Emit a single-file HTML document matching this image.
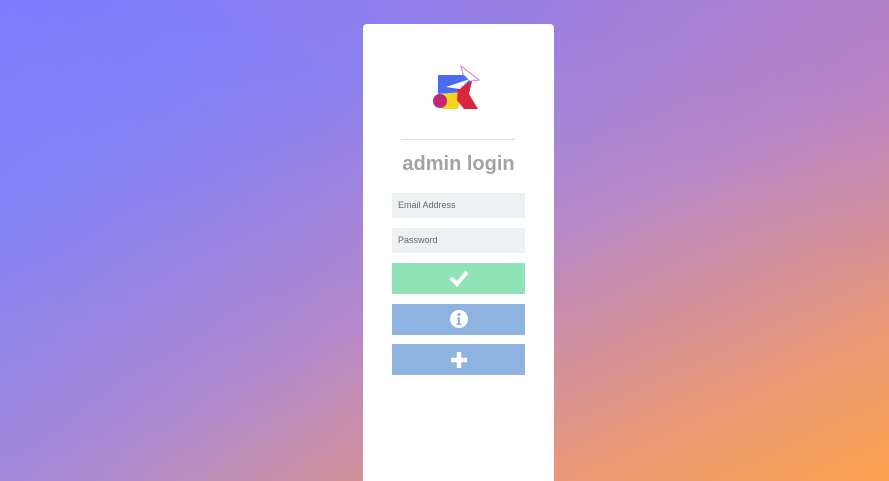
<!DOCTYPE html>
<html><head><style>
html,body{margin:0;padding:0;width:889px;height:481px;overflow:hidden;font-family:"Liberation Sans",sans-serif}
body{background:linear-gradient(155deg,#7d78fe 0%,#8a80f0 25%,#b888c8 55%,#e89878 82%,#fba24e 100%);position:relative}
.ov{position:absolute;inset:0;background:linear-gradient(90deg,rgba(120,140,255,.3),rgba(0,0,0,0) 45%,rgba(0,0,0,0))}
.ov2{position:absolute;inset:0;background:linear-gradient(200deg,rgba(190,120,190,.45),rgba(0,0,0,0) 35%)}
.card{position:absolute;left:363px;top:24px;width:191px;height:470px;background:#fff;border-radius:4px}
.hr{position:absolute;left:39px;top:115px;width:113px;height:1px;background:#ddd}
h1{position:absolute;top:129px;left:0;width:191px;margin:0;text-align:center;font-size:20px;font-weight:bold;color:#a3a3a3}
.in{position:absolute;left:29px;width:133px;height:25px;background:#edf1f4;font-size:9px;color:#666;line-height:25px;padding-left:6px;box-sizing:border-box}
.bt{position:absolute;left:29px;width:133px;height:31px;box-sizing:border-box}
</style></head><body><div class="ov"></div><div class="ov2"></div>
<div class="card">
<svg style="position:absolute;left:69px;top:41px" width="50" height="48" viewBox="0 0 50 48">
<polygon points="29,1 47,15 33,17" fill="none" stroke="#c87be0" stroke-width="1"/>
<polygon points="6,10 32,10 40,18 32,27 6,29" fill="#4a6cf0"/>
<polygon points="10,29 30,27 26,44 10,44" fill="#f7d21e"/>
<polygon points="26,24 40,16 37,29 46,44 32,44 25,35" fill="#d8263a"/>
<polygon points="14,22 38,14 28,24" fill="#fff"/>
<circle cx="8" cy="36" r="7" fill="#c2287a"/>
</svg>
<div class="hr"></div>
<h1>admin login</h1>
<div class="in" style="top:169px">Email Address</div>
<div class="in" style="top:204px">Password</div>
<div class="bt" style="top:239px;background:#8fe3b6"><svg style="position:absolute;left:57px;top:6px" width="20" height="18" viewBox="0 0 20 18"><path d="M2 9 L8 15 L18 3" stroke="#fff" stroke-width="4" fill="none"/></svg></div>
<div class="bt" style="top:280px;background:#8fb3e1"><svg style="position:absolute;left:57px;top:5px" width="20" height="20" viewBox="0 0 20 20"><circle cx="10" cy="10" r="9" fill="#fff"/><circle cx="10" cy="5.5" r="1.6" fill="#8fb3e1"/><path d="M8 8.5h3v6h1.5v1.5h-5v-1.5h1.5v-4.5h-1z" fill="#8fb3e1"/></svg></div>
<div class="bt" style="top:320px;background:#8fb3e1"><svg style="position:absolute;left:57px;top:6px" width="20" height="20" viewBox="0 0 20 20"><path d="M10 2v16M2 10h16" stroke="#fff" stroke-width="4.5"/></svg></div>
</div>
</body></html>
